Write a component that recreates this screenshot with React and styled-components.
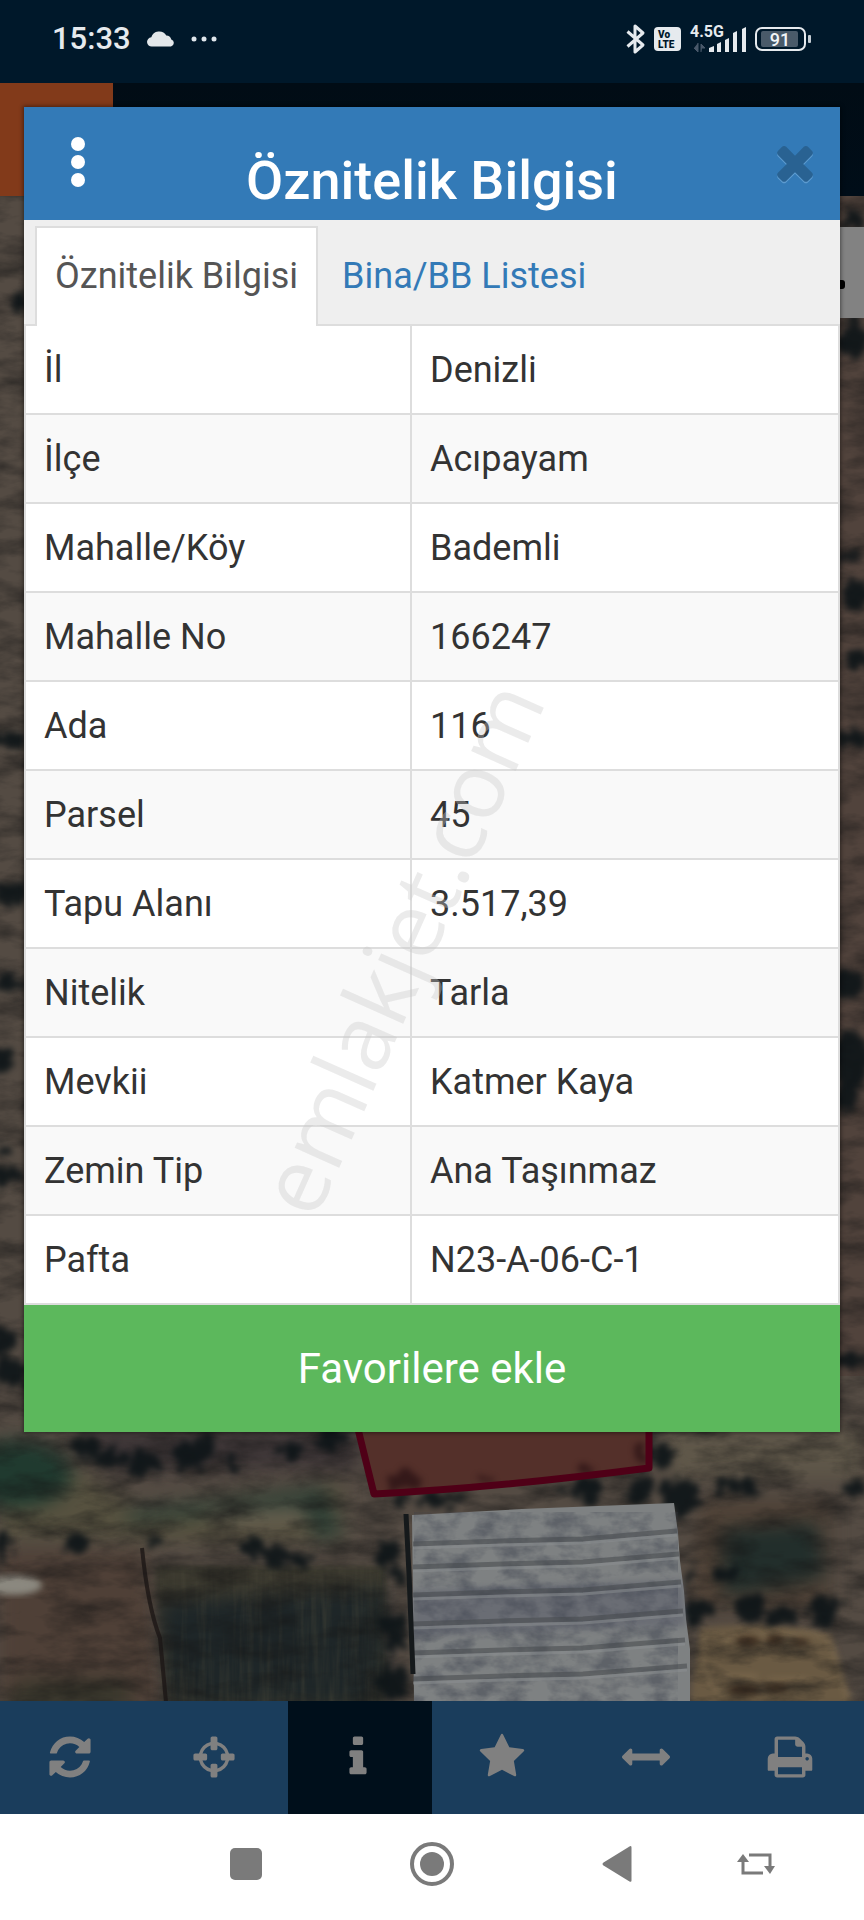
import React from "react";
import styled, { createGlobalStyle } from "styled-components";

const GlobalStyle = createGlobalStyle`
  *, *::before, *::after { box-sizing: border-box; }
  body { margin: 0; font-family: Roboto, "Liberation Sans", sans-serif; background: #00182a; }
  button { font: inherit; border: 0; padding: 0; margin: 0; background: none; cursor: pointer; }
`;

const Screen = styled.div`
  min-height: 100vh;
  display: grid;
  grid-template-rows: 83px 1fr 113px 106px;
  overflow: hidden;
`;

/* Status bar */
const StatusBar = styled.header`
  display: flex;
  justify-content: space-between;
  align-items: center;
  padding: 0 52px 6px;
  background: #00182a;
  color: #e6eaee;
`;

const StatusGroup = styled.div`
  display: flex;
  align-items: center;
  gap: ${(p) => p.$gap}px;
`;

const Clock = styled.time`
  font-size: 31px;
  line-height: 36px;
  font-weight: 500;
`;

/* Map and what lies above it */
const Stage = styled.main`
  display: grid;
  grid-template-columns: minmax(0, 1fr);
`;

const Backdrop = styled.div`
  grid-area: 1 / 1;
  display: flex;
  flex-direction: column;
  min-height: 0;
`;

const AppHeader = styled.div`
  flex: 0 0 113px;
  background: linear-gradient(#010c15, #000d18);
  display: flex;
`;

const HeaderMenu = styled.div`
  width: 113px;
  background: #823a1a;
`;

const MapArea = styled.div`
  flex: 1 1 0;
  min-height: 0;
  position: relative;
  overflow: hidden;
  background: #4b413a;
`;

const MapDrawing = styled.svg`
  position: absolute;
  inset: 0;
  width: 100%;
  height: 100%;
  color-interpolation-filters: sRGB;
`;

const MapControl = styled.div`
  position: absolute;
  top: 31px;
  right: 0;
  width: 60px;
  height: 91px;
  display: flex;
  align-items: center;
  padding: 24px 19px 0;
  background: #828282;
  &::after {
    content: "";
    width: 22px;
    height: 9px;
    border-radius: 3px;
    background: #000;
  }
`;

/* Dialog */
const Dialog = styled.section`
  grid-area: 1 / 1;
  align-self: start;
  margin: 24px 24px 269px;
  position: relative;
  background: #fff;
  box-shadow: 0 0 4px 1px rgba(0, 0, 0, 0.45);
`;

const DialogHeader = styled.div`
  height: 113px;
  display: grid;
  grid-template-columns: 90px 1fr 90px;
  background: #337ab7;
  color: #fff;
`;

const HeaderButton = styled.button`
  display: flex;
  justify-content: ${(p) => p.$align};
  align-items: center;
  padding-bottom: 4px;
  color: #fff;
`;

const DialogTitle = styled.h1`
  margin: 0;
  padding-top: 40px;
  text-align: center;
  font-size: 54px;
  line-height: 68px;
  font-weight: 500;
`;

const Tabs = styled.div`
  display: flex;
  gap: 4px;
  height: 106px;
  padding: 6px 11px 0;
  background: #efefef;
  border-bottom: 2px solid #ddd;
`;

const Tab = styled.button`
  height: 100px;
  padding: 0 18px 2px;
  border: 2px solid ${(p) => (p.$active ? "#ddd" : "transparent")};
  border-bottom: 0;
  background: ${(p) => (p.$active ? "#fff" : "transparent")};
  color: ${(p) => (p.$active ? "#555" : "#337ab7")};
  font-size: 36px;
  line-height: 48px;
  white-space: nowrap;
`;

const Attributes = styled.table`
  width: 100%;
  table-layout: fixed;
  border-collapse: separate;
  border-spacing: 0;
  border-left: 2px solid #ddd;
  border-right: 2px solid #ddd;
  color: #333;
  font-size: 36px;
  line-height: 48px;
`;

const Row = styled.tr`
  height: 89px;
  background: ${(p) => (p.$odd ? "#fff" : "#f9f9f9")};
  & > * {
    padding: 0 18px;
    text-align: left;
    font-weight: 400;
    border-bottom: 2px solid #ddd;
  }
  & > th {
    width: 386px;
    border-right: 2px solid #ddd;
  }
`;

const FavoriteButton = styled.button`
  width: 100%;
  height: 127px;
  display: block;
  background: #5cb85c;
  color: #fff;
  font-size: 42px;
  line-height: 48px;
`;

const Watermark = styled.div`
  position: absolute;
  left: 46%;
  top: 840px;
  transform: translate(-50%, -50%) rotate(-66deg);
  color: rgba(200, 200, 200, 0.36);
  font-family: "Open Sans", sans-serif;
  font-size: 91px;
  line-height: 100px;
  white-space: nowrap;
  pointer-events: none;
`;

/* Bottom bars */
const Toolbar = styled.nav`
  display: grid;
  grid-template-columns: repeat(6, 1fr);
  background: #1a3d5c;
`;

const Tool = styled.button`
  display: flex;
  justify-content: center;
  align-items: center;
  padding: 0 4px 2px 0;
  background: ${(p) => (p.$active ? "#000f1b" : "transparent")};
  color: #808080;
`;

const SystemNav = styled.nav`
  display: grid;
  grid-template-columns: 153fr 186fr 186fr 184fr 94fr 61fr;
  padding-bottom: 6px;
  background: #fff;
`;

const SystemButton = styled.button`
  grid-column: ${(p) => p.$column};
  display: flex;
  justify-content: center;
  align-items: center;
  color: #7a7a7a;
`;

const GLYPHS = {
  refresh:
    "M1639 1056q0 5-1 7-64 268-268 434.5t-478 166.5q-146 0-282.5-55t-243.5-157l-129 129q-19 19-45 19t-45-19-19-45v-448q0-26 19-45t45-19h448q26 0 45 19t19 45-19 45l-137 137q71 66 161 102t187 36q134 0 250-65t186-179q11-17 53-117 8-23 30-23h192q13 0 22.5 9.5t9.5 22.5zm25-800v448q0 26-19 45t-45 19h-448q-26 0-45-19t-19-45 19-45l138-138q-148-137-349-137-134 0-250 65t-186 179q-11 17-53 117-8 23-30 23h-199q-13 0-22.5-9.5t-9.5-22.5v-7q65-268 270-434.5t480-166.5q146 0 284 55.5t245 156.5l130-129q19-19 45-19t45 19 19 45z",
  crosshairs:
    "M1325 1024h-109q-26 0-45-19t-19-45v-128q0-26 19-45t45-19h109q-32-108-112.5-188.5t-188.5-112.5v109q0 26-19 45t-45 19h-128q-26 0-45-19t-19-45v-109q-108 32-188.5 112.5t-112.5 188.5h109q26 0 45 19t19 45v128q0 26-19 45t-45 19h-109q32 108 112.5 188.5t188.5 112.5v-109q0-26 19-45t45-19h128q26 0 45 19t19 45v109q108-32 188.5-112.5t112.5-188.5zm339-192v128q0 26-19 45t-45 19h-143q-37 161-154.5 278.5t-278.5 154.5v143q0 26-19 45t-45 19h-128q-26 0-45-19t-19-45v-143q-161-37-278.5-154.5t-154.5-278.5h-143q-26 0-45-19t-19-45v-128q0-26 19-45t45-19h143q37-161 154.5-278.5t278.5-154.5v-143q0-26 19-45t45-19h128q26 0 45 19t19 45v143q161 37 278.5 154.5t154.5 278.5h143q26 0 45 19t19 45z",
  info:
    "M1216 1344v128q0 26-19 45t-45 19h-512q-26 0-45-19t-19-45v-128q0-26 19-45t45-19h64v-384h-64q-26 0-45-19t-19-45v-128q0-26 19-45t45-19h384q26 0 45 19t19 45v576h64q26 0 45 19t19 45zm-128-1152v192q0 26-19 45t-45 19h-256q-26 0-45-19t-19-45v-192q0-26 19-45t45-19h256q26 0 45 19t19 45z",
  star:
    "M1728 647q0 22-26 48l-363 354 86 500q1 7 1 20 0 21-10.5 35.5t-30.5 14.5q-19 0-40-12l-449-236-449 236q-22 12-40 12-21 0-31.5-14.5t-10.5-35.5q0-6 2-20l86-500-364-354q-25-27-25-48 0-37 56-46l502-73 225-455q19-41 49-41t49 41l225 455 502 73q56 9 56 46z",
  arrows:
    "M1792 896q0 26-19 45l-256 256q-19 19-45 19t-45-19-19-45v-128h-1024v128q0 26-19 45t-45 19-45-19l-256-256q-19-19-19-45t19-45l256-256q19-19 45-19t45 19 19 45v128h1024v-128q0-26 19-45t45-19 45 19l256 256q19 19 19 45z",
  print:
    "M448 1536h896v-256h-896v256zm0-640h896v-384h-160q-40 0-68-28t-28-68v-160h-640v640zm1152 64q0-26-19-45t-45-19-45 19-19 45 19 45 45 19 45-19 19-45zm128 0v416q0 13-9.5 22.5t-22.5 9.5h-224v160q0 40-28 68t-68 28h-960q-40 0-68-28t-28-68v-160h-224q-13 0-22.5-9.5t-9.5-22.5v-416q0-79 56.5-135.5t135.5-56.5h64v-544q0-40 28-68t68-28h672q40 0 88 20t76 48l152 152q28 28 48 76t20 88v256h64q79 0 135.5 56.5t56.5 135.5z",
  times:
    "M1490 1322q0 40-28 68l-136 136q-28 28-68 28t-68-28l-294-294-294 294q-28 28-68 28t-68-28l-136-136q-28-28-28-68t28-68l294-294-294-294q-28-28-28-68t28-68l136-136q28-28 68-28t68 28l294 294 294-294q28-28 68-28t68 28l136 136q28 28 28 68t-28 68l-294 294 294 294q28 28 28 68z",
};

const Glyph = ({ name, size = 48 }) => (
  <svg width={size} height={size} viewBox="0 0 1792 1792" fill="currentColor" aria-hidden="true">
    <path d={GLYPHS[name]} />
  </svg>
);

const CloseGlyph = () => (
  <svg width="54" height="54" viewBox="0 0 1792 1792" aria-hidden="true">
    <path d={GLYPHS.times} fill="#5c9bd0" transform="translate(0 50)" />
    <path d={GLYPHS.times} fill="#296292" />
  </svg>
);

const KebabGlyph = () => (
  <svg width="52" height="52" viewBox="0 0 52 52" fill="currentColor" aria-hidden="true">
    <circle cx="16" cy="8" r="7" />
    <circle cx="16" cy="26" r="7" />
    <circle cx="16" cy="44" r="7" />
  </svg>
);

const CloudGlyph = () => (
  <svg width="28" height="16" viewBox="0 0 28 16" fill="#e3e7ea" aria-hidden="true">
    <path d="M5 15.500a4.600 4.600 0 0 1-.7-9.200A8.200 8.200 0 0 1 19.300 4.600a5.300 5.300 0 0 1 5 3.800A3.700 3.700 0 0 1 24 15.500z" />
  </svg>
);

const DotsGlyph = () => (
  <svg width="26" height="6" viewBox="0 0 26 6" fill="#dfe6ec" aria-hidden="true">
    <circle cx="3" cy="3" r="2.500" />
    <circle cx="13" cy="3" r="2.500" />
    <circle cx="23" cy="3" r="2.500" />
  </svg>
);

const BluetoothGlyph = () => (
  <svg width="20" height="32" viewBox="0 0 20 32" fill="none" stroke="#e6eaee" strokeWidth="3" strokeLinejoin="round" aria-hidden="true">
    <path d="M1.500 8.500 17 22 9 29V3l8 7L1.500 23.500" />
  </svg>
);

const VolteGlyph = () => (
  <svg width="27" height="24" viewBox="0 0 27 24" fontFamily="Roboto, sans-serif" fontWeight="900" aria-label="VoLTE">
    <rect width="27" height="24" rx="4" fill="#e6eaee" />
    <text x="4" y="11" fontSize="10" fill="#00182a">Vo</text>
    <text x="4" y="21" fontSize="10" fill="#00182a">LTE</text>
  </svg>
);

const SignalGlyph = () => (
  <svg width="58" height="46" viewBox="0 -8 58 46" fontFamily="Roboto, sans-serif" aria-label="4.5G">
    <text x="1" y="13" fontSize="16" fontWeight="700" fill="#e6eaee">4.5G</text>
    <path d="M9 19v9l-4-4M12 28v-8l4 4h-3" fill="#49586a" stroke="#49586a" strokeWidth="1" />
    <g fill="#e6eaee">
      <path d="M20 28v-4l5-2v6zM28 28v-8l4-2v10zM36 28v-12l4-2v14zM44 28V9l4-2v21zM53 28V5l4-2v25z" />
    </g>
  </svg>
);

const BatteryGlyph = () => (
  <svg width="57" height="26" viewBox="0 0 57 26" fontFamily="Roboto, sans-serif" aria-label="91">
    <rect x="1" y="2" width="49" height="22" rx="6" fill="none" stroke="#e6eaee" strokeWidth="2" />
    <rect x="6" y="5" width="37" height="16" rx="2" fill="#4a5a69" />
    <rect x="53" y="9" width="3" height="8" rx="1" fill="#c4ccd3" />
    <text x="25" y="20" fontSize="18" fontWeight="500" textAnchor="middle" fill="#f2f5f7">91</text>
  </svg>
);

const TREES = [
  [85, 1446, 14, 12], [110, 1458, 16, 10], [145, 1464, 18, 12], [190, 1456, 18, 13], [208, 1446, 12, 10],
  [232, 1460, 10, 8], [290, 1450, 12, 10], [330, 1438, 16, 12], [78, 1544, 12, 10], [152, 1543, 6, 5],
  [253, 1548, 12, 9], [278, 1556, 18, 12], [300, 1560, 12, 8], [388, 1553, 12, 12], [396, 1574, 7, 7],
  [390, 1622, 13, 12], [394, 1642, 12, 10], [394, 1682, 15, 18], [3, 1545, 8, 14],
  [645, 1452, 8, 14], [666, 1456, 10, 14], [440, 1500, 24, 7], [588, 1490, 17, 12], [640, 1490, 14, 13],
  [680, 1496, 20, 20], [725, 1484, 12, 8], [748, 1486, 10, 9], [400, 1500, 12, 4],
  [690, 1574, 7, 5], [694, 1612, 14, 12], [714, 1610, 7, 6], [750, 1608, 14, 14], [780, 1616, 16, 10],
  [825, 1610, 15, 16], [728, 1574, 13, 9], [560, 1494, 8, 4], [852, 1490, 12, 8],
  [12, 740, 20, 8], [14, 892, 22, 12], [10, 984, 18, 9], [6, 1176, 22, 9], [4, 1060, 14, 12],
  [2, 1342, 12, 14], [8, 1372, 20, 14], [22, 300, 8, 10], [4, 1150, 10, 6],
  [854, 338, 14, 22], [856, 594, 14, 16], [858, 660, 12, 10], [852, 738, 18, 10], [848, 985, 16, 14],
  [850, 1060, 18, 34], [844, 1100, 14, 12], [852, 1360, 20, 7], [846, 558, 12, 6], [854, 218, 10, 8],
];

const ROOF_LINES = [1541, 1564, 1592, 1621, 1650, 1676];

const SatelliteMap = () => (
  <MapDrawing viewBox="0 196 864 1505" preserveAspectRatio="xMidYMid slice" aria-hidden="true">
    <defs>
      <filter id="rough" x="-20%" y="-20%" width="140%" height="140%">
        <feTurbulence type="fractalNoise" baseFrequency="0.09" numOctaves="3" seed="4" result="n" />
        <feDisplacementMap in="SourceGraphic" in2="n" scale="24" xChannelSelector="R" yChannelSelector="G" />
        <feGaussianBlur stdDeviation="3" />
      </filter>
      <filter id="soft" x="-20%" y="-20%" width="140%" height="140%">
        <feGaussianBlur stdDeviation="9" />
      </filter>
      <filter id="haze" x="-20%" y="-20%" width="140%" height="140%">
        <feGaussianBlur stdDeviation="3" />
      </filter>
      <filter id="mottle" x="0" y="0" width="100%" height="100%">
        <feTurbulence type="fractalNoise" baseFrequency="0.02 0.05" numOctaves="5" seed="11" />
        <feColorMatrix values="0 0 0 0 0.08  0 0 0 0 0.08  0 0 0 0 0.08  1.100 0 0 0 -0.400" />
      </filter>
      <filter id="streaks" x="0" y="0" width="100%" height="100%">
        <feTurbulence type="fractalNoise" baseFrequency="0.15 0.012" numOctaves="3" seed="7" />
        <feColorMatrix values="0 0 0 0 0.300  0 0 0 0 0.290  0 0 0 0 0.230  1.600 0 0 0 -0.600" />
      </filter>
      <filter id="dapple" x="0" y="0" width="100%" height="100%">
        <feTurbulence type="fractalNoise" baseFrequency="0.04 0.07" numOctaves="4" seed="3" />
        <feColorMatrix values="0 0 0 0 0.220  0 0 0 0 0.240  0 0 0 0 0.290  2.400 0 0 0 -0.900" />
      </filter>
    </defs>

    <rect y="196" width="864" height="1505" fill="#544b43" />
    <rect x="760" y="196" width="104" height="1180" fill="#51433c" />
    <g filter="url(#soft)">
      <path d="M70 1425h290v45H110z" fill="#3e3637" />
      <path d="M0 1440c50-10 90 50 140 66l200-24 6 60-346-4z" fill="#56513f" />
      <ellipse cx="16" cy="1474" rx="56" ry="34" fill="#203a2f" />
      <path d="M125 1510l200-24 18 50-24 6-20-34-170 15z" fill="#303f35" />
      <path d="M205 1512l100-4v16l-90 2z" fill="#6a6252" />
      <path d="M0 1550h145l16 160H0z" fill="#4f4037" />
      <path d="M20 1680h110v30H0z" fill="#38362b" />
      <path d="M660 1430h204v48H670z" fill="#5f5749" />
      <path d="M700 1500h130v110H690z" fill="#4e4136" />
      <path d="M722 1530l95-8 8 55-100 20z" fill="#222e2b" />
    </g>
    <path d="M154 1566h232v140H168z" fill="#3a382e" filter="url(#haze)" />
    <path d="M160 1602l224-14v116H170z" fill="#1e2628" filter="url(#soft)" />
    <rect x="160" y="1566" width="226" height="140" filter="url(#streaks)" opacity="0.5" />
    <path d="M700 1628q70-8 130 6l22 70H690z" fill="#6a5a43" filter="url(#haze)" />
    <g fill="none" stroke="#8b7759" strokeWidth="3" opacity="0.7" filter="url(#haze)">
      <path d="M706 1634q-12 40 20 62M722 1640q90-14 108 0l18 60M724 1676h34M768 1680h40" />
    </g>
    <g fill="#3f2e20" filter="url(#haze)">
      <ellipse cx="748" cy="1641" rx="12" ry="5" />
      <ellipse cx="775" cy="1640" rx="9" ry="5" />
      <ellipse cx="800" cy="1642" rx="10" ry="3" />
      <ellipse cx="744" cy="1690" rx="16" ry="5" />
      <ellipse cx="776" cy="1688" rx="12" ry="4" />
    </g>
    <ellipse cx="14" cy="1585" rx="28" ry="10" fill="#8b887f" filter="url(#haze)" />
    <path d="M142 1548q6 60 18 90l6 64" fill="none" stroke="#1d1715" strokeWidth="4" opacity="0.8" />

    <rect y="196" width="864" height="1505" filter="url(#mottle)" />
    <g fill="#0d1417" opacity="0.9" filter="url(#rough)">
      {TREES.map(([cx, cy, rx, ry]) => (
        <ellipse key={`${cx}-${cy}`} cx={cx} cy={cy} rx={rx} ry={ry} />
      ))}
    </g>

    <path d="M412 1515l110-6 152-6 4 30 2 28 4 30 2 28 4 30 0 52H414z" fill="#7e8182" />
    <path d="M412 1590l270-10 4 46-274 10z" fill="#62656f" opacity="0.7" filter="url(#haze)" />
    <rect x="414" y="1512" width="264" height="190" filter="url(#dapple)" opacity="0.45" />
    {ROOF_LINES.map((y, i) => (
      <g key={y} fill="none">
        <path d={`M413 ${y + 3}l90 -3 80 -2 ${94 + i * 2} -8`} stroke="#45484d" strokeWidth="5" opacity="0.55" />
        <path d={`M413 ${y + 7}l90 -3 80 -2 ${94 + i * 2} -8`} stroke="#8c9092" strokeWidth="3" opacity="0.5" />
      </g>
    ))}
    <path d="M406 1514l3 60 4 100" fill="none" stroke="#15191b" strokeWidth="5" />

    <path d="M357 1425l17 69q120-6 274-25v-50z" fill="#54302a" />
    <g fill="#2c1315" opacity="0.8" filter="url(#rough)">
      <ellipse cx="402" cy="1480" rx="18" ry="9" />
      <ellipse cx="482" cy="1480" rx="6" ry="4" />
      <ellipse cx="586" cy="1470" rx="9" ry="5" />
      <ellipse cx="640" cy="1452" rx="5" ry="12" />
    </g>
    <path d="M357 1425l17 69q120-6 275-26v-50" fill="none" stroke="#4f0017" strokeWidth="7" strokeLinejoin="round" />
  </MapDrawing>
);

const ATTRIBUTES = [
  ["İl", "Denizli"],
  ["İlçe", "Acıpayam"],
  ["Mahalle/Köy", "Bademli"],
  ["Mahalle No", "166247"],
  ["Ada", "116"],
  ["Parsel", "45"],
  ["Tapu Alanı", "3.517,39"],
  ["Nitelik", "Tarla"],
  ["Mevkii", "Katmer Kaya"],
  ["Zemin Tip", "Ana Taşınmaz"],
  ["Pafta", "N23-A-06-C-1"],
];

const TOOLS = [
  ["refresh", "Yenile"],
  ["crosshairs", "Konum"],
  ["info", "Bilgi"],
  ["star", "Favoriler"],
  ["arrows", "Ölçüm"],
  ["print", "Yazdır"],
];

export default function App() {
  return (
    <>
      <GlobalStyle />
      <Screen>
        <StatusBar>
          <StatusGroup $gap={16}>
            <Clock>15:33</Clock>
            <CloudGlyph />
            <DotsGlyph />
          </StatusGroup>
          <StatusGroup $gap={8}>
            <BluetoothGlyph />
            <VolteGlyph />
            <SignalGlyph />
            <BatteryGlyph />
          </StatusGroup>
        </StatusBar>

        <Stage>
          <Backdrop>
            <AppHeader>
              <HeaderMenu />
            </AppHeader>
            <MapArea>
              <SatelliteMap />
              <MapControl />
            </MapArea>
          </Backdrop>

          <Dialog role="dialog" aria-labelledby="dialog-title">
            <DialogHeader>
              <HeaderButton $align="flex-end" aria-label="Menü">
                <KebabGlyph />
              </HeaderButton>
              <DialogTitle id="dialog-title">Öznitelik Bilgisi</DialogTitle>
              <HeaderButton $align="center" aria-label="Kapat">
                <CloseGlyph />
              </HeaderButton>
            </DialogHeader>
            <Tabs role="tablist">
              <Tab role="tab" aria-selected="true" $active>Öznitelik Bilgisi</Tab>
              <Tab role="tab" aria-selected="false">Bina/BB Listesi</Tab>
            </Tabs>
            <Attributes>
              <tbody>
                {ATTRIBUTES.map(([label, value], i) => (
                  <Row key={label} $odd={i % 2 === 0}>
                    <th scope="row">{label}</th>
                    <td>{value}</td>
                  </Row>
                ))}
              </tbody>
            </Attributes>
            <FavoriteButton>Favorilere ekle</FavoriteButton>
            <Watermark>emlakjet.com</Watermark>
          </Dialog>
        </Stage>

        <Toolbar>
          {TOOLS.map(([name, label]) => (
            <Tool key={name} aria-label={label} $active={name === "info"}>
              <Glyph name={name} />
            </Tool>
          ))}
        </Toolbar>

        <SystemNav>
          <SystemButton $column={2} aria-label="Son uygulamalar">
            <svg width="32" height="32" viewBox="0 0 32 32" fill="currentColor">
              <rect width="32" height="32" rx="5" />
            </svg>
          </SystemButton>
          <SystemButton $column={3} aria-label="Ana ekran">
            <svg width="44" height="44" viewBox="0 0 44 44">
              <circle cx="22" cy="22" r="20" fill="none" stroke="currentColor" strokeWidth="4" />
              <circle cx="22" cy="22" r="12" fill="currentColor" />
            </svg>
          </SystemButton>
          <SystemButton $column={4} aria-label="Geri">
            <svg width="30" height="38" viewBox="0 0 30 38" fill="currentColor">
              <path d="M27.500 1.400Q29.500.500 29.500 2.500v33q0 2-2 1L1.500 20.500q-2-1.500 0-3z" />
            </svg>
          </SystemButton>
          <SystemButton $column={5} aria-label="Döndür">
            <svg width="38" height="22" viewBox="0 0 38 22">
              <path d="M6 6v14h20M12 2h21v14" fill="none" stroke="currentColor" strokeWidth="3" />
              <path d="M0 9l6-8 6 8zM27 13l6 8 5-8z" fill="currentColor" />
            </svg>
          </SystemButton>
        </SystemNav>
      </Screen>
    </>
  );
}
